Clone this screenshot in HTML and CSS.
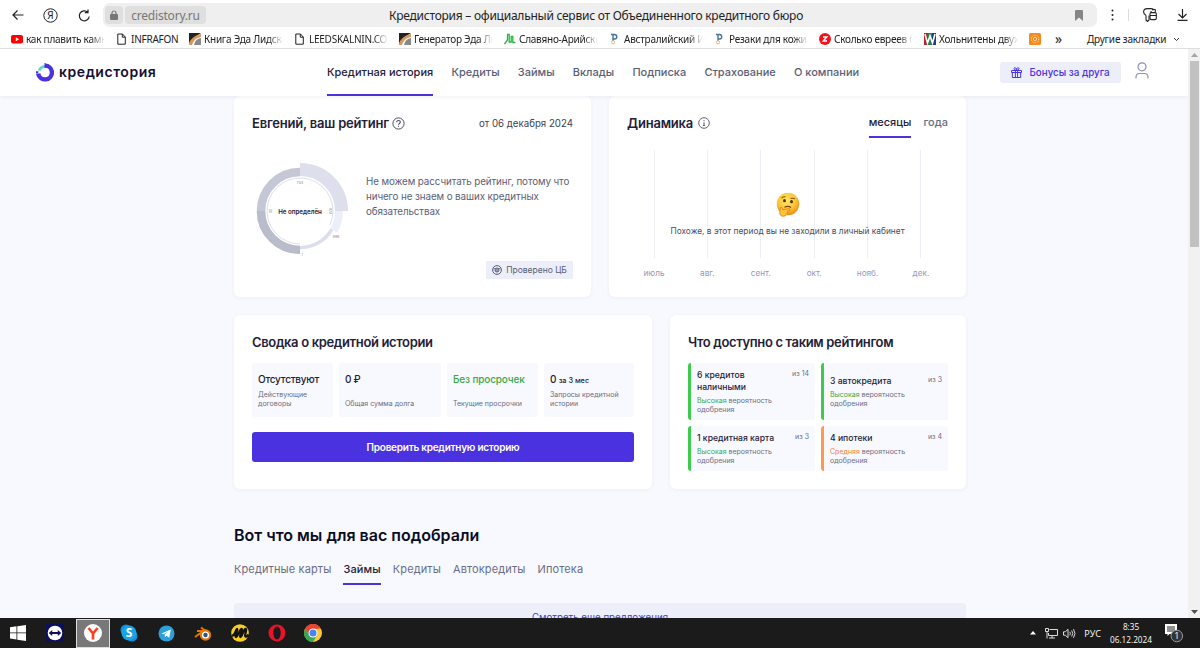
FILE: index.html
```
<!DOCTYPE html>
<html lang="ru">
<head>
  <meta charset="UTF-8" />
  <meta name="viewport" content="width=device-width, initial-scale=1.0"/>
  <title>Кредистория – официальный сервис от Объединенного кредитного бюро</title>
  <link rel="stylesheet" href="styles.css">
</head>
<body>
  <div class="toolbar">
    <svg class="tb-back" width="12" height="12" viewBox="0 0 12 12"><path d="M11.5 6H1M5.500 1.500L1 6l4.500 4.500" fill="none" stroke="#222" stroke-width="1.200"/></svg>
    <svg class="tb-ya" width="15" height="15" viewBox="0 0 15 15"><circle cx="7.500" cy="7.500" r="6.700" fill="none" stroke="#222"/><text x="7.500" y="11" text-anchor="middle" class="ya-letter">Я</text></svg>
    <svg class="tb-reload" width="13" height="13" viewBox="0 0 13 13"><path d="M11.300 7.500A5 5 0 1 1 9.800 3.200M10 .5v3.200H6.800" fill="none" stroke="#222" stroke-width="1.200"/></svg>
    <div class="address">
      <span class="lock"><svg width="8" height="10" viewBox="0 0 8 10"><path d="M2 5V3a2 2 0 0 1 4 0v2" fill="none" stroke="#777" stroke-width="1.200"/><rect y="4" width="8" height="6" rx="1" fill="#777"/></svg></span>
      <span class="host">credistory.ru</span>
      <span class="page-title">Кредистория – официальный сервис от Объединенного кредитного бюро</span>
      <svg class="flag" width="8" height="11" viewBox="0 0 8 11"><path d="M0 1q0-1 1-1h6q1 0 1 1v10L4 7.500 0 11z" fill="#858585"/></svg>
    </div>
    <svg class="tb-dots" width="3" height="12" viewBox="0 0 3 12" fill="#222"><circle cx="1.500" cy="1.500" r="1"/><circle cx="1.500" cy="6" r="1"/><circle cx="1.500" cy="10.500" r="1"/></svg>
    <span class="tb-sep"></span>
    <svg class="tb-keys" width="14" height="14" viewBox="0 0 14 14" fill="none" stroke="#222" stroke-width="1.100"><path d="M3 7.500V12l1.500 1.500L6 12V7.500M3 7.500C1 6.500.5 5 .6 3.500.8 1.500 2.500.6 4.500.6H8c1.500 0 2 1 2 2"/><rect x="7" y="4.600" width="6.300" height="7" rx="1.300"/><path d="M7 7.500h6.300M8 4.600V3M12.300 4.600V1.700L9 1"/></svg>
    <svg class="tb-load" width="11" height="12" viewBox="0 0 11 12"><path d="M5.500 0v8.500M1.500 5l4 4 4-4M.5 11.300h10" fill="none" stroke="#222" stroke-width="1.200"/></svg>
  </div>

  <div class="bookmarks">
    <span class="mark"><svg width="12" height="12" viewBox="0 0 12 12"><rect y="2" width="12" height="8.500" rx="2" fill="#f00"/><path d="M4.800 4.300v4L8.200 6.300z" fill="#fff"/></svg><span class="mark-name">как плавить камни</span></span>
    <span class="mark short"><svg width="12" height="12" viewBox="0 0 12 12"><path d="M1.800 1h4.700L9.300 4v7.200H1.800zM6.300 1v3.200h3" fill="none" stroke="#222"/></svg><span class="mark-name">INFRAFON</span></span>
    <span class="mark"><svg width="12" height="12" viewBox="0 0 12 12"><path d="M0 0h12L6 4 1 12H0z" fill="#222"/><path d="M0 10Q3 3 12 1v3Q5 5 3 12H0z" fill="#d8985c"/><path d="M5 12q1-6 7-7v7z" fill="#888"/></svg><span class="mark-name">Книга Эда Лидскалнина</span></span>
    <span class="mark"><svg width="12" height="12" viewBox="0 0 12 12"><path d="M1.800 1h4.700L9.300 4v7.200H1.800zM6.300 1v3.200h3" fill="none" stroke="#222"/></svg><span class="mark-name">LEEDSKALNIN.COM</span></span>
    <span class="mark"><svg width="12" height="12" viewBox="0 0 12 12"><path d="M0 0h12L6 4 1 12H0z" fill="#222"/><path d="M0 10Q3 3 12 1v3Q5 5 3 12H0z" fill="#d8985c"/><path d="M5 12q1-6 7-7v7z" fill="#888"/></svg><span class="mark-name">Генератор Эда Лидскалнина</span></span>
    <span class="mark"><svg width="12" height="12" viewBox="0 0 12 12"><path d="M.5 11L3.500 7V1.500h1.700V9h2V3.500h1.600V9.500h2.700" fill="none" stroke="#2fb344" stroke-width="1.300"/></svg><span class="mark-name">Славяно-Арийские веды</span></span>
    <span class="mark"><svg width="12" height="12" viewBox="0 0 12 12"><path d="M2 1.500h3.500a2 2 0 0 1 0 4.500H4M4 1.500V8" fill="none" stroke="#42759b" stroke-width="1.400"/><circle cx="4" cy="9.300" r="1.600" fill="none" stroke="#e2b77c"/></svg><span class="mark-name">Австралийский Институт</span></span>
    <span class="mark"><svg width="12" height="12" viewBox="0 0 12 12"><path d="M2 1.500h3.500a2 2 0 0 1 0 4.500H4M4 1.500V8" fill="none" stroke="#42759b" stroke-width="1.400"/><circle cx="4" cy="9.300" r="1.600" fill="none" stroke="#e2b77c"/></svg><span class="mark-name">Резаки для кожи | Купить</span></span>
    <span class="mark"><svg width="12" height="12" viewBox="0 0 12 12"><circle cx="6" cy="6" r="6" fill="#f5121c"/><path d="M4 4h3.700L4.300 8H8" fill="none" stroke="#fff" stroke-width="1.500"/></svg><span class="mark-name">Сколько евреев было</span></span>
    <span class="mark"><svg width="12" height="12" viewBox="0 0 12 12"><path d="M0 0h4v12H0z" fill="#b6252b"/><path d="M4 0h4v12H4z" fill="#26824a"/><path d="M8 0h4v12H8z" fill="#1d3f8c"/><path d="M1 1l2.500 9L6 3l2.500 7L11 1" fill="none" stroke="#fff" stroke-width="1.600"/></svg><span class="mark-name">Хольнитены двухсторонние</span></span>
    <svg class="mark-orange" width="12" height="12" viewBox="0 0 12 12"><rect width="12" height="12" rx="1.500" fill="#f58a1f"/><circle cx="6" cy="6" r="3.700" fill="none" stroke="#ffd3a0" stroke-dasharray="1.500 .8"/><circle cx="6" cy="6" r="1.700" fill="none" stroke="#ffd3a0"/></svg>
    <span class="more">»</span>
    <span class="other">Другие закладки</span>
    <svg class="other-arrow" width="7" height="5" viewBox="0 0 7 5"><path d="M1 1l2.500 2.500L6 1" fill="none" stroke="#333"/></svg>
  </div>

  <div class="window">
    <div class="page">
      <header class="header">
        <a class="logo">
          <svg width="18" height="19" viewBox="0 0 18 19" fill="none" stroke-width="4.400"><path d="M9 2.600a6.900 6.900 0 1 1-6.800 8" stroke="#4b32e0"/><path d="M2.200 10.400H0V8.200h2.500" fill="#4b32e0" stroke="none"/><path d="M3.200 7.600A6.300 6.300 0 0 1 9 3.300" stroke="#5cd6d0" stroke-width="2.800"/><path d="M9 0v5" stroke="#4b32e0" stroke-width="1"/></svg>
          <span>кредистория</span>
        </a>
        <nav class="nav">
          <a class="active">Кредитная история</a>
          <a>Кредиты</a>
          <a>Займы</a>
          <a>Вклады</a>
          <a>Подписка</a>
          <a>Страхование</a>
          <a>О компании</a>
        </nav>
        <a class="bonus">
          <svg width="11" height="11" viewBox="0 0 11 11" fill="none" stroke="#4b32e0"><path d="M.5 3.500h10v2H.5zM1.300 5.500h8.400v5H1.300zM4.400 3.500v7M6.600 3.500v7M5.500 3.300C2.500 3 2.500.8 3.800.7S5.500 2 5.500 3.300C5.500 2 6 .6 7.200.7s1.300 2.300-1.700 2.600"/></svg>
          <span>Бонусы за друга</span>
        </a>
        <svg class="user" width="14" height="17" viewBox="0 0 14 17" fill="none" stroke="#8b8fb5" stroke-width="1.200"><circle cx="7" cy="4.800" r="4"/><path d="M1 16.500v-1.300c0-2.300 1.500-3.700 3.500-3.700h5c2 0 3.500 1.400 3.500 3.700v1.300"/></svg>
      </header>

      <main class="content">
        <div class="row">
          <section class="card rating">
            <div class="card-head">
              <h2>Евгений, ваш рейтинг</h2>
              <svg width="13" height="13" viewBox="0 0 13 13" fill="none" stroke="#4a4c60"><circle cx="6.500" cy="6.500" r="5.600"/><path d="M4.700 5.300c0-2.500 3.700-2.300 3.600-.1 0 1.200-1.800 1.300-1.800 2.600M6.500 8.700v1.100" stroke-width="1.100"/></svg>
              <span class="date">от 06 декабря 2024</span>
            </div>
            <div class="rating-body">
              <svg class="gauge" width="100" height="100" viewBox="-48 -50 100 100" fill="none">
                <path d="M0 39A39 39 0 0 1-39 0" stroke="#b9bccb" stroke-width="8.600"/>
                <path d="M-39 0A39 39 0 0 1 0-39" stroke="#c5c7d7" stroke-width="8.600"/>
                <path d="M0-41.500A41.500 41.500 0 0 1 41.500 0" stroke="#dddfed" stroke-width="13"/>
                <path d="M39 0A39 39 0 0 1 33.800 19.500" stroke="#eceefa" stroke-width="8"/>
                <path d="M31.800 18.400A36.700 36.700 0 0 1 0 36.700" stroke="#dcdeed" stroke-width="3.500"/>
                <path d="M0 33A33 33 0 1 1 29.900 14" stroke="#dcdeed"/>
                <text class="gauge-label" x="0" y="2.500">Не определён</text>
                <g class="gauge-marks">
                  <text x="0" y="-27">704</text>
                  <text x="36" y="26.500">999</text>
                  <text x="2" y="44.500">1</text>
                  <text transform="translate(28.500 0) rotate(90)">876</text>
                  <text transform="translate(-28 0) rotate(-90)">60</text>
                </g>
              </svg>
              <p>Не можем рассчитать рейтинг, потому что ничего не знаем о ваших кредитных обязательствах</p>
            </div>
            <div class="verified">
              <svg width="10" height="10" viewBox="0 0 10 10" fill="none" stroke="#5b5e75"><circle cx="5" cy="5" r="4.400"/><path d="M1.500 3.500h7M1.500 5h7M3 6.500h4M5 2v6.500M3.500 3v3.500M6.500 3v3.500" stroke-width=".7"/></svg>
              <span>Проверено ЦБ</span>
            </div>
          </section>

          <section class="card dynamics">
            <div class="card-head">
              <h2>Динамика</h2>
              <svg width="12" height="12" viewBox="0 0 12 12" fill="none" stroke="#63657b"><circle cx="6" cy="6" r="5.300"/><path d="M6 5.200v3.300M6 3v1.200M5 8.500h2"/></svg>
              <div class="period">
                <a class="active">месяцы</a>
                <a>года</a>
              </div>
            </div>
            <div class="chart">
              <div class="month"><i></i><span>июль</span></div>
              <div class="month"><i></i><span>авг.</span></div>
              <div class="month"><i></i><span>сент.</span></div>
              <div class="month"><i></i><span>окт.</span></div>
              <div class="month"><i></i><span>нояб.</span></div>
              <div class="month"><i></i><span>дек.</span></div>
              <div class="empty">
                <svg width="24" height="25" viewBox="0 0 24 25">
                  <defs><radialGradient id="face" cx=".45" cy=".35" r=".65"><stop offset="0" stop-color="#ffe768"/><stop offset=".6" stop-color="#fcc636"/><stop offset="1" stop-color="#ee8b1b"/></radialGradient></defs>
                  <circle cx="12" cy="12" r="11.200" fill="url(#face)"/>
                  <path d="M5.500 6.300Q7 4 9.500 5M14.500 6.500q2.500-.8 4.500.4" fill="none" stroke="#8a4b12" stroke-width="1.100"/>
                  <ellipse cx="8.500" cy="8.700" rx="1.500" ry="1.600" fill="#59300f"/><ellipse cx="15.500" cy="9.700" rx="1.500" ry="1.600" fill="#59300f"/>
                  <path d="M8.500 15.300q3.500-2 6.500.2" fill="none" stroke="#7a3e10" stroke-width="1.100"/>
                  <path d="M4.500 15.500c1.300-.8 2 .4 2 2.200l6.500-1c1.700 0 1.500 1.500.2 1.900l-2 .6c1 1.700-.5 4.500-3.500 5-3.300.4-4.200-2-3.800-4.500z" fill="#fdc23a" stroke="#db7f1b" stroke-width=".8"/>
                </svg>
                <p>Похоже, в этот период вы не заходили в личный кабинет</p>
              </div>
            </div>
          </section>
        </div>

        <div class="row second">
          <section class="card summary">
            <h2>Сводка о кредитной истории</h2>
            <div class="stats">
              <div class="stat"><b>Отсутствуют</b><span>Действующие договоры</span></div>
              <div class="stat"><b>0 ₽</b><span>Общая сумма долга</span></div>
              <div class="stat good"><b>Без просрочек</b><span>Текущие просрочки</span></div>
              <div class="stat"><b>0 <small>за 3 мес</small></b><span>Запросы кредитной истории</span></div>
            </div>
            <button class="check">Проверить кредитную историю</button>
          </section>

          <section class="card available">
            <h2>Что доступно с таким рейтингом</h2>
            <div class="offers">
              <div class="offer">
                <div class="offer-body"><div><b>6 кредитов наличными</b><p><em>Высокая</em> вероятность одобрения</p></div><span>из 14</span></div>
              </div>
              <div class="offer">
                <div class="offer-body"><div><b>3 автокредита</b><p><em>Высокая</em> вероятность одобрения</p></div><span>из 3</span></div>
              </div>
              <div class="offer">
                <div class="offer-body"><div><b>1 кредитная карта</b><p><em>Высокая</em> вероятность одобрения</p></div><span>из 3</span></div>
              </div>
              <div class="offer medium">
                <div class="offer-body"><div><b>4 ипотеки</b><p><em>Средняя</em> вероятность одобрения</p></div><span>из 4</span></div>
              </div>
            </div>
          </section>
        </div>

        <h1>Вот что мы для вас подобрали</h1>
        <div class="tabs">
          <a>Кредитные карты</a>
          <a class="active">Займы</a>
          <a>Кредиты</a>
          <a>Автокредиты</a>
          <a>Ипотека</a>
        </div>
        <a class="more-offers">Смотреть еще предложения</a>
      </main>
    </div>

    <div class="scrollbar">
      <svg width="7" height="4" viewBox="0 0 7 4"><path d="M0 4l3.500-4L7 4z" fill="#a3a3a3"/></svg>
      <div class="thumb"></div>
      <svg width="7" height="4" viewBox="0 0 7 4"><path d="M0 0l3.500 4L7 0z" fill="#505050"/></svg>
    </div>
  </div>

  <footer class="taskbar">
    <span class="app"><svg width="16" height="16" viewBox="0 0 16 16" fill="#fff"><path d="M0 2.300l6.500-1v6.200H0zM7.300 1.200L16 0v7.500H7.300zM0 8.300h6.500v6.300l-6.500-1zM7.300 8.300H16V16l-8.700-1.200z"/></svg></span>
    <span class="app"><svg width="18" height="18" viewBox="0 0 18 18"><rect width="18" height="18" rx="1" fill="#0b0f5c"/><circle cx="9" cy="9" r="7.300" fill="#fff"/><path d="M2.800 9l3.400-3v2h5.600V6l3.400 3-3.400 3v-2H6.200v2z" fill="#0b0f5c"/></svg></span>
    <span class="app current"><svg width="18" height="18" viewBox="0 0 18 18"><circle cx="9" cy="9" r="9" fill="#fff"/><path d="M4.500 4L9 9.500V15.500" fill="none" stroke="#fc3f1d" stroke-width="2.600"/><path d="M13.500 4L9 9.500" stroke="#fc3f1d" stroke-width="2.600"/></svg></span>
    <span class="app"><svg width="18" height="18" viewBox="0 0 18 18"><circle cx="6" cy="6" r="5.500" fill="#0f8fd8"/><circle cx="12" cy="12" r="5.500" fill="#0f8fd8"/><circle cx="9" cy="9" r="7.500" fill="#17a3e6"/><text x="9" y="13.300" text-anchor="middle" class="skype-letter">S</text></svg></span>
    <span class="app"><svg width="17" height="17" viewBox="0 0 17 17"><circle cx="8.500" cy="8.500" r="8" fill="#2aa1da"/><path d="M3.500 8.400l9.300-3.900-1.500 8.300-2.900-2.100-1.500 1.500-.3-2.700 3.800-3.300-4.800 3z" fill="#fff"/></svg></span>
    <span class="app"><svg width="18" height="15" viewBox="0 0 18 15" fill="none"><path d="M1 11L10 4.500M3 5h8M7 1.500l6 4.500" stroke="#ea7600" stroke-width="2"/><circle cx="11.500" cy="9" r="5.700" fill="#ea7600"/><circle cx="11.500" cy="9" r="3.600" fill="#fff"/><circle cx="11.500" cy="9" r="2.200" fill="#265787"/></svg></span>
    <span class="app"><svg width="18" height="18" viewBox="0 0 18 18"><circle cx="9" cy="9" r="8.800" fill="#f7cf1d"/><path d="M.5 11.500c3 1.500 4.500-6.500 5.500-6.500S3.500 13 5 13s4-8 5.500-8S8 13 9.500 13s3-8 5-8-2 8 .5 7.500 2-1.500 2.500-2" fill="none" stroke="#111" stroke-width="2.300"/></svg></span>
    <span class="app"><svg width="18" height="18" viewBox="0 0 18 18"><circle cx="9" cy="9" r="8.500" fill="#e5142b"/><ellipse cx="9" cy="9" rx="3.700" ry="6.400" fill="#1b1b1b"/></svg></span>
    <span class="app"><svg width="18" height="18" viewBox="0 0 18 18"><circle cx="9" cy="9" r="9" fill="#fcc934"/><path d="M1.200 4.500A9 9 0 0 1 16.800 4.500L9 5 5.100 11.300z" fill="#ea4335"/><path d="M1.200 4.500A9 9 0 0 0 9 18l3.900-6.800L5.100 11.300z" fill="#34a853"/><circle cx="9" cy="9" r="4.500" fill="#fff"/><circle cx="9" cy="9" r="3.500" fill="#4285f4"/></svg></span>
    <div class="tray">
      <svg width="6" height="4" viewBox="0 0 6 4"><path d="M0 3.500L3 0l3 3.500z" fill="#fff"/></svg>
      <svg class="net" width="13" height="11" viewBox="0 0 13 11" fill="none" stroke="#ddd"><path d="M4.500 1.500h8v6h-9V5M4 10h6M7 7.500V10M.5.500h3v3h-3zM2 3.500v7"/></svg>
      <svg class="sound" width="13" height="11" viewBox="0 0 13 11" fill="none" stroke="#ddd"><path d="M.5 3.800H2.300L5 1.300v8.400L2.300 7.200H.5zM6.800 3.800q1.200 1.700 0 3.400M8.700 2.500q2 3 0 6M10.500 1.200q3 4.300 0 8.600"/></svg>
      <span class="lang">РУС</span>
      <div class="clock">8:35<br>06.12.2024</div>
      <svg class="notes" width="20" height="20" viewBox="0 0 20 20"><path d="M1 1h12v10H5.500L3.500 13V11H1z" fill="#fff"/><path d="M3 4h8M3 6h8M3 8h8" stroke="#222"/><circle cx="12.800" cy="13" r="5.800" fill="#333" stroke="#999"/><text x="12.800" y="16.300" text-anchor="middle" class="count">1</text></svg>
    </div>
  </footer>
</body>
</html>
```
FILE: styles.css
```
* {
  box-sizing: border-box;
}
body {
  margin: 0;
  height: 648px;
  display: flex;
  flex-direction: column;
  overflow: hidden;
  font-family: Inter, "Liberation Sans", sans-serif;
  background: #fff;
  color: #1f2138;
}
svg {
  flex: none;
  display: block;
}
h1, h2, p {
  margin: 0;
}

/* browser */
.toolbar {
  height: 30px;
  flex: none;
  display: flex;
  align-items: center;
  padding: 0 12px;
  font-family: "Noto Sans", sans-serif;
}
.tb-ya { margin-left: 19px; }
.tb-reload { margin: 0 12px 0 20px; }
.ya-letter { font-size: 10px; fill: #222; }
.address {
  width: 994px;
  height: 24px;
  display: flex;
  align-items: center;
  background: #efefef;
  border-radius: 7px;
  padding-left: 2px;
}
.lock, .host {
  height: 18px;
  display: flex;
  align-items: center;
  justify-content: center;
  background: #dfdfdf;
  border-radius: 4px;
}
.lock { width: 18px; }
.host {
  width: 81px;
  margin-left: 2px;
  font-size: 12px;
  letter-spacing: -0.200px;
  color: #777;
}
.page-title {
  width: 416px;
  margin-left: 183px;
  font-size: 12px;
  letter-spacing: -0.250px;
  white-space: nowrap;
  color: #222;
}
.flag { margin-left: auto; margin-right: 14px; }
.tb-dots { margin-left: 14px; }
.tb-sep { width: 1px; height: 12px; background: #ddd; margin: 0 14px; }
.tb-load { margin-left: 20px; }
.bookmarks {
  height: 19px;
  flex: none;
  display: flex;
  align-items: center;
  gap: 11px;
  padding-left: 11px;
  border-bottom: 1px solid #dedede;
  font-family: "Noto Sans", sans-serif;
  font-size: 10px;
  letter-spacing: -0.250px;
  color: #222;
}
.mark {
  width: 94px;
  flex: none;
  display: flex;
  align-items: center;
  gap: 3px;
  overflow: hidden;
}
.mark.short { width: 62px; overflow: visible; }
.mark-name {
  flex: 1;
  white-space: nowrap;
  overflow: hidden;
  -webkit-mask-image: linear-gradient(to right, #000 82%, transparent);
  mask-image: linear-gradient(to right, #000 82%, transparent);
}
.short .mark-name { -webkit-mask-image: none; mask-image: none; overflow: visible; }
.more { font-size: 14px; margin-left: 3px; line-height: 14px; }
.other { width: 79px; margin-left: 14px; white-space: nowrap; letter-spacing: -0.150px; }
.other-arrow { margin-left: -4px; }

/* page */
.window {
  height: 569px;
  flex: none;
  display: flex;
}
.page {
  width: 1188px;
  overflow: hidden;
  background: #f8f9fe;
}
.header {
  height: 47px;
  display: flex;
  align-items: center;
  background: #fff;
  padding-left: 36px;
  box-shadow: 0 1px 4px rgba(40,40,90,0.07);
  position: relative;
}
.logo {
  width: 291px;
  display: flex;
  align-items: center;
  gap: 5px;
  font-size: 14px;
  font-weight: 600;
  letter-spacing: 0.550px;
  color: #130f35;
}
.logo span { padding-bottom: 2px; }
.nav {
  width: 673px;
  height: 47px;
  display: flex;
  gap: 18.200px;
  font-size: 11px;
  font-weight: 500;
  color: #5b5e75;
}
.nav a {
  line-height: 46px;
  white-space: nowrap;
}
.nav .active {
  color: #1f2138;
  border-bottom: 2px solid #4b32e0;
}
.bonus {
  width: 121px;
  height: 21px;
  display: flex;
  align-items: center;
  justify-content: center;
  gap: 7px;
  background: #eceefa;
  border-radius: 3px;
  font-size: 9.800px;
  font-weight: 500;
  color: #4b32e0;
}
.bonus span { padding-bottom: 1px; }
.user { margin-left: 14px; margin-bottom: 5px; }
.content {
  width: 732px;
  margin-left: 234px;
}
.row {
  display: flex;
  justify-content: space-between;
}
.second { margin-top: 18px; }
.card {
  background: #fff;
  border-radius: 6px;
  padding: 18px;
  box-shadow: 0 1px 4px rgba(60,60,120,0.05);
}
.card h2 {
  font-size: 13px;
  line-height: 18px;
  font-weight: 600;
  letter-spacing: -0.350px;
  white-space: nowrap;
}
.card-head h2 { letter-spacing: -0.200px; }
.rating, .dynamics {
  width: 357px;
  height: 201px;
}
.card-head {
  height: 18px;
  display: flex;
  align-items: center;
}
.card-head svg { margin-left: 3px; }
.dynamics .card-head svg { margin-left: 5px; }
.date {
  margin-left: auto;
  font-size: 9.700px;
  color: #3d3f55;
}
.rating-body {
  display: flex;
  align-items: center;
  margin-top: 29px;
}
.rating-body p {
  width: 210px;
  margin-left: 14px;
  margin-top: -30px;
  font-size: 9.800px;
  letter-spacing: -0.090px;
  line-height: 15px;
  color: #5b5e75;
}
.gauge-label {
  font-size: 6.200px;
  font-weight: 600;
  text-anchor: middle;
  fill: #1f2138;
}
.gauge-marks {
  font-size: 3.500px;
  text-anchor: middle;
  fill: #888;
}
.verified {
  width: 87px;
  height: 18px;
  margin-left: auto;
  display: flex;
  align-items: center;
  justify-content: center;
  gap: 4px;
  background: #eceefa;
  font-size: 8.500px;
  color: #5b5e75;
  white-space: nowrap;
}
.period {
  height: 24px;
  margin-left: auto;
  align-self: flex-start;
  display: flex;
  gap: 12px;
  font-size: 11px;
  font-weight: 500;
  color: #6b6d82;
}
.period a { line-height: 17px; }
.period .active { color: #1f2138; border-bottom: 2px solid #4b32e0; }
.chart {
  display: grid;
  grid-template-columns: repeat(6, 53.400px);
  justify-content: center;
  margin-top: 18px;
  position: relative;
}
.month {
  display: flex;
  flex-direction: column;
  align-items: center;
  font-size: 8.200px;
  line-height: 12px;
  color: #9698b8;
}
.month i {
  width: 1px;
  height: 108px;
  background: #ecedf7;
  margin-bottom: 9px;
}
.empty {
  position: absolute;
  top: 42px;
  left: 0;
  right: 0;
  display: flex;
  flex-direction: column;
  align-items: center;
  gap: 8px;
  font-size: 8.350px;
  line-height: 12px;
  color: #4a4c60;
}
.summary { width: 418px; height: 174px; }
.available { width: 296px; height: 174px; }
.stats {
  display: grid;
  grid-template-columns: 81px 102px 91px 90px;
  gap: 6px;
  margin-top: 12px;
}
.stat {
  height: 54px;
  display: flex;
  flex-direction: column;
  justify-content: space-between;
  padding: 9px 6px;
  background: #f8f9fe;
  border-radius: 3px;
  white-space: nowrap;
}
.stat b {
  font-size: 10px;
  letter-spacing: -0.250px;
  line-height: 14px;
  font-weight: 500;
}
.stat small { font-size: 7.300px; letter-spacing: 0; }
.stat span {
  font-size: 7px;
  line-height: 9px;
  color: #6b6d82;
  white-space: normal;
}
.good b { color: #38a845; letter-spacing: -0.150px; }
.check {
  width: 382px;
  height: 30px;
  margin-top: 15px;
  border: none;
  border-radius: 3px;
  background: #4b32e0;
  color: #fff;
  font-family: inherit;
  font-size: 10px;
  letter-spacing: -0.250px;
  font-weight: 600;
}
.offers {
  display: grid;
  grid-template-columns: 127px 127px;
  grid-template-rows: 57px 45px;
  gap: 6px;
  margin-top: 12px;
}
.offer {
  display: flex;
  align-items: center;
  padding: 0 6px;
  background: #f8f9fe;
  border-left: 3px solid #3ccb4b;
  border-radius: 3px;
}
.offer.medium { border-left-color: #ff9a4d; }
.offer-body {
  flex: 1;
  display: flex;
  justify-content: space-between;
}
.offer-body > div { width: 84px; }
.offer b {
  display: block;
  font-size: 8.600px;
  line-height: 12px;
  font-weight: 500;
}
.offer p, .offer span {
  font-size: 7px;
  line-height: 9px;
  color: #6b6d82;
}
.offer p { margin-top: 3px; }
.offer span { white-space: nowrap; }
.offer em { font-style: normal; color: #38a845; }
.offer.medium em { color: #ff7a35; }
h1 {
  margin-top: 34px;
  font-size: 16px;
  line-height: 24px;
  font-weight: 600;
  color: #0b0b26;
}
.tabs {
  display: flex;
  gap: 12px;
  margin-top: 12px;
  font-size: 11px;
  letter-spacing: 0.120px;
  color: #6b6d82;
}
.tabs a { height: 26px; line-height: 20px; }
.tabs .active { font-weight: 500; color: #1f2138; border-bottom: 2px solid #4b32e0; }
.more-offers {
  display: block;
  height: 30px;
  margin-top: 18px;
  background: #eceefa;
  border-radius: 3px;
  text-align: center;
  font-size: 9.700px;
  line-height: 30px;
  color: #4b32e0;
}
.scrollbar {
  width: 12px;
  display: flex;
  flex-direction: column;
  align-items: center;
  padding: 4px 0;
  background: #f1f1f1;
}
.thumb {
  width: 9px;
  height: 186px;
  margin-top: 4px;
  margin-bottom: auto;
  background: #c1c1c1;
}

/* taskbar */
.taskbar {
  height: 30px;
  flex: none;
  display: flex;
  align-items: center;
  background: #1b1b1b;
  color: #fff;
  font-family: "Open Sans", sans-serif;
}
.app {
  width: 36.800px;
  height: 30px;
  display: flex;
  align-items: center;
  justify-content: center;
}
.current {
  width: 34px;
  height: 29px;
  margin: 0 1.500px 0 2px;
  background: #787878;
  border: 1px solid #ddd;
}
.skype-letter { font-size: 12px; font-weight: 700; fill: #fff; }
.tray {
  margin-left: auto;
  display: flex;
  align-items: center;
  padding-right: 16px;
}
.net { margin-left: 9px; }
.sound { margin-left: 5px; }
.lang { margin-left: 8px; font-size: 9px; }
.clock {
  width: 42px;
  margin-left: 9px;
  text-align: center;
  font-size: 8.200px;
  line-height: 13px;
}
.notes { margin-left: 12px; }
.count { font-size: 9px; fill: #fff; }
```
